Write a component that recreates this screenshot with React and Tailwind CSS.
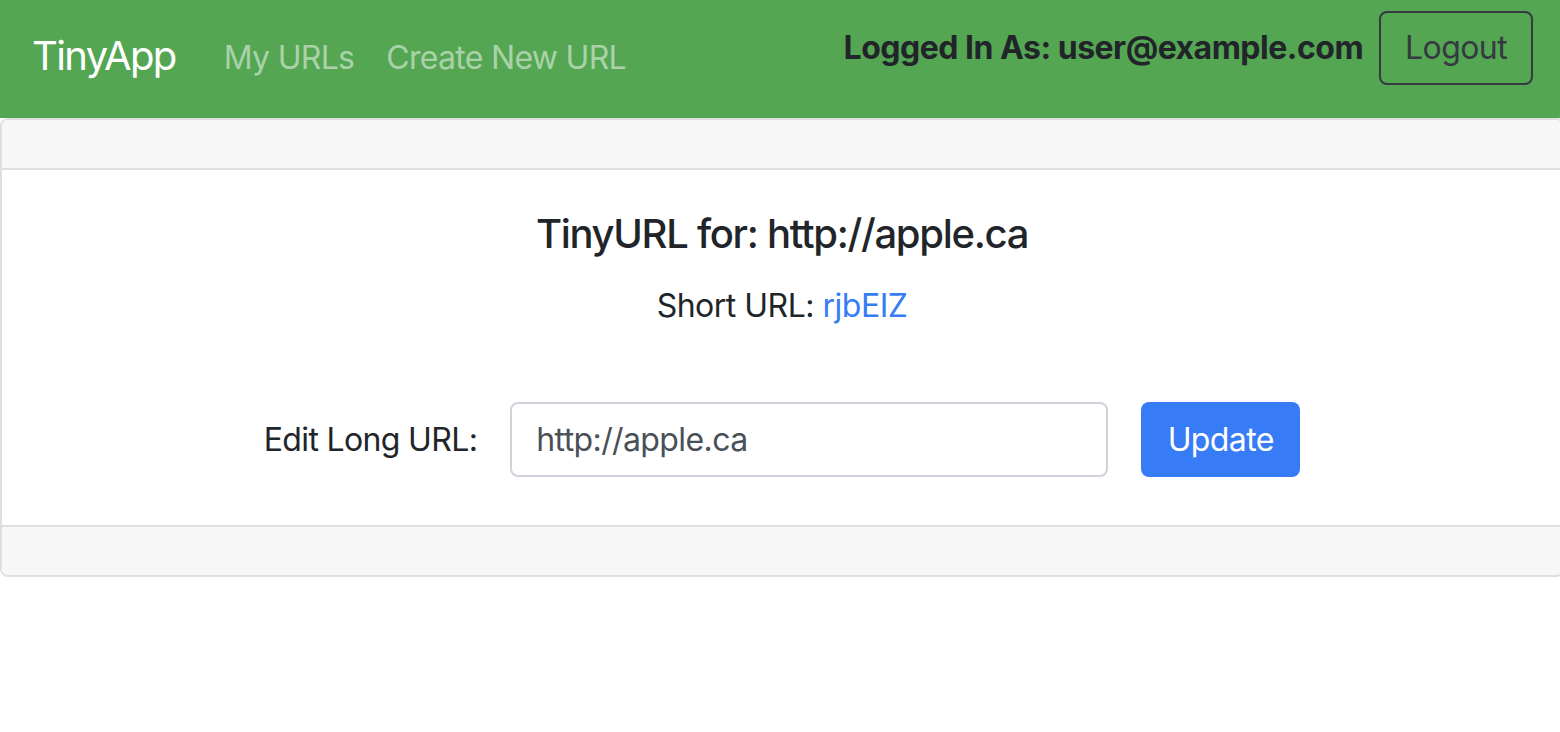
export default function App() {
  return (
    <div
      className="w-[1560px] min-h-[732px] overflow-hidden bg-white text-[#212529]"
      style={{ fontFamily: 'Inter, "Noto Sans", sans-serif' }}
    >
      <nav className="flex items-start h-[118px] bg-[#54a653] pl-[32px] pr-[27px]">
        <a className="mt-[32px] mr-[32px] text-[40px] leading-[48px] tracking-[-1.6px] text-white whitespace-nowrap">TinyApp</a>
        <a className="mt-[34px] px-[16px] text-[32px] leading-[48px] tracking-[-0.7px] text-[#aad2a9] whitespace-nowrap">My URLs</a>
        <a className="mt-[34px] px-[16px] text-[32px] leading-[48px] tracking-[-0.7px] text-[#aad2a9] whitespace-nowrap">Create New URL</a>
        <div className="ml-auto mt-[11px] flex items-center">
          <span className="mr-[16px] text-[32px] leading-[48px] font-bold tracking-[-0.5px] text-[#212529] whitespace-nowrap">
            Logged In As: user@example.com
          </span>
          <button className="border-2 border-[#343a40] rounded-[8px] px-[24px] py-[11px] text-[32px] leading-[48px] tracking-[-0.6px] text-[#343a40]">
            Logout
          </button>
        </div>
      </nav>

      <div className="w-[1564px] border-2 border-[#dfdfdf] rounded-[8px] overflow-hidden">
        <div className="h-[50px] bg-[#f7f7f7] border-b-2 border-[#dfdfdf]" />
        <div className="pt-[40px] pb-[48px] flex flex-col items-center">
          <h5 className="text-[40px] leading-[48px] font-medium tracking-[-1.3px]">TinyURL for: http://apple.ca</h5>
          <p className="mt-[24px] text-[32px] leading-[48px] tracking-[-0.5px]">
            Short URL: <a className="text-[#377cf6]">rjbEIZ</a>
          </p>
          <form className="mt-[72px] flex items-center">
            <label className="text-[32px] leading-[48px] tracking-[-0.65px] mr-[33px] whitespace-nowrap">Edit Long URL:</label>
            <input
              type="text"
              defaultValue="http://apple.ca"
              className="w-[598px] h-[75px] border-2 border-[#ced4da] rounded-[8px] px-[24px] text-[32px] tracking-[-0.6px] text-[#495057] outline-none bg-white"
              style={{ fontFamily: 'Inter, "Noto Sans", sans-serif' }}
            />
            <button
              type="button"
              className="ml-[33px] w-[159px] h-[75px] bg-[#377cf6] rounded-[8px] text-white text-[32px] leading-[48px] tracking-[-0.6px]"
            >
              Update
            </button>
          </form>
        </div>
        <div className="h-[50px] bg-[#f7f7f7] border-t-2 border-[#dfdfdf]" />
      </div>
    </div>
  );
}
